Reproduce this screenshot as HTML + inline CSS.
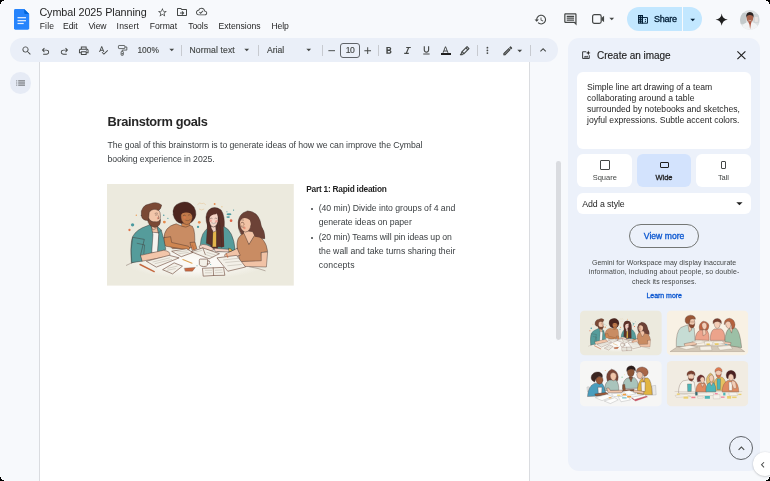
<!DOCTYPE html>
<html>
<head>
<meta charset="utf-8">
<title>Cymbal 2025 Planning</title>
<style>
*{box-sizing:border-box;margin:0;padding:0}
body{filter:blur(0.3px)}
html,body{width:770px;height:481px;overflow:hidden;background:#f7f9fc;font-family:"Liberation Sans",sans-serif;color:#1f1f1f}
.a{position:absolute}
.t{position:absolute;white-space:nowrap;line-height:1;color:#1f1f1f}
.g{color:#444746}
.tbx{-webkit-text-stroke:0.15px #444746}
.p{color:#3c4043}
svg{position:absolute;overflow:visible}
.sep{position:absolute;top:45px;width:1px;height:11px;background:#c7cad0}
#toolbar{left:10px;top:38.4px;width:548px;height:23.5px;border-radius:12px;background:#eaeff8}
#page{left:39.2px;top:62px;width:491px;height:430px;background:#fff;border:1px solid #dadce0;border-top:none}
#outline{left:9.6px;top:72px;width:21.6px;height:21.6px;border-radius:50%;background:#e6ebf5}
#panel{left:568px;top:38.2px;width:191.8px;height:432.5px;border-radius:11px;background:#ecf1fa}
.card{position:absolute;background:#fff;border-radius:6px}
.img{position:absolute;border-radius:5px;overflow:hidden}
</style>
</head>
<body>

<!-- docs logo -->
<svg style="left:14.2px;top:8.7px" width="15.2" height="20.7" viewBox="0 0 15.2 20.7"><path d="M1.4 0H10.200L15.200 5V19.300Q15.200 20.700 13.800 20.700H1.400Q0 20.700 0 19.300V1.400Q0 0 1.400 0Z" fill="#2684fc"/><path d="M10.200 0L15.200 5H11.400Q10.200 5 10.200 3.800Z" fill="#0066da"/><rect x="3.500" y="8.100" width="8.500" height="1.200" fill="#e8f0fe"/><rect x="3.500" y="11.100" width="8.500" height="1.200" fill="#e8f0fe"/><rect x="3.500" y="13.900" width="6.200" height="1.200" fill="#e8f0fe"/></svg>
<div class="t" style="left:39.4px;top:6.91px;font-size:10.8px;letter-spacing:-0.07px">Cymbal 2025 Planning</div>
<div class="t" style="left:39.7px;top:22.32px;font-size:8.6px;letter-spacing:0.16px">File</div>
<div class="t" style="left:63px;top:22.32px;font-size:8.6px;letter-spacing:-0.08px">Edit</div>
<div class="t" style="left:88.4px;top:22.32px;font-size:8.6px;letter-spacing:-0.12px">View</div>
<div class="t" style="left:116.6px;top:22.32px;font-size:8.6px;letter-spacing:0.15px">Insert</div>
<div class="t" style="left:149.8px;top:22.32px;font-size:8.6px">Format</div>
<div class="t" style="left:188.2px;top:22.32px;font-size:8.6px;letter-spacing:-0.08px">Tools</div>
<div class="t" style="left:218.5px;top:22.32px;font-size:8.6px">Extensions</div>
<div class="t" style="left:271.5px;top:22.32px;font-size:8.6px;letter-spacing:-0.1px">Help</div>
<svg style="left:157.3px;top:6.8px" width="10.8" height="10.8" viewBox="0 0 24 24" fill="#444746" ><path d="M22 9.240l-7.190-.62L12 2 9.190 8.630 2 9.240l5.460 4.730L5.820 21 12 17.270 18.180 21l-1.630-7.030L22 9.240zM12 15.400l-3.760 2.270 1-4.280-3.320-2.880 4.380-.38L12 6.100l1.710 4.040 4.380.38-3.320 2.880 1 4.280L12 15.400z"/></svg>
<svg style="left:176.2px;top:6.2px" width="12" height="12" viewBox="0 0 24 24" fill="#444746" ><path d="M20 6h-8l-2-2H4c-1.100 0-2 .9-2 2v12c0 1.100.9 2 2 2h16c1.100 0 2-.9 2-2V8c0-1.100-.9-2-2-2zm0 12H4V6h5.170l2 2H20v10zm-7.160-5H8v2h4.840l-1.580 1.590L12.670 18l4-4-4-4-1.410 1.410L12.840 13z"/></svg>
<svg style="left:196px;top:6.3px" width="11.2" height="11.2" viewBox="0 0 24 24" fill="#444746" ><path d="M19.350 10.040C18.670 6.590 15.640 4 12 4 9.110 4 6.600 5.640 5.350 8.040 2.340 8.360 0 10.910 0 14c0 3.310 2.690 6 6 6h13c2.760 0 5-2.240 5-5 0-2.640-2.050-4.780-4.650-4.960zM19 18H6c-2.210 0-4-1.790-4-4 0-2.050 1.530-3.760 3.560-3.970l1.070-.11.5-.95C8.080 7.140 9.940 6 12 6c2.620 0 4.880 1.860 5.390 4.430l.3 1.500 1.530.11c1.560.1 2.780 1.410 2.780 2.960 0 1.650-1.350 3-3 3zm-9-3.820l-2.090-2.090L6.500 13.500 10 17l6.010-6.010-1.410-1.410z"/></svg>
<svg style="left:534.4px;top:12.6px" width="13.2" height="13.2" viewBox="0 0 24 24" fill="#444746" ><path d="M13 3c-4.970 0-9 4.030-9 9H1l3.890 3.890.07.14L9 12H6c0-3.870 3.130-7 7-7s7 3.130 7 7-3.130 7-7 7c-1.930 0-3.680-.79-4.940-2.060l-1.420 1.420C8.270 19.990 10.510 21 13 21c4.970 0 9-4.030 9-9s-4.030-9-9-9zm-1 5v5l4.280 2.540.72-1.210-3.500-2.080V8H12z"/></svg>
<svg style="left:562.5px;top:11.9px" width="14.8" height="14.8" viewBox="0 0 24 24" fill="#444746" ><path d="M21.990 4c0-1.100-.89-2-1.990-2H4c-1.100 0-2 .9-2 2v12c0 1.100.9 2 2 2h14l4 4-.01-18zM20 4v13.170L18.830 16H4V4h16zM6 12h12v2H6zm0-3h12v2H6zm0-3h12v2H6z"/></svg>
<svg style="left:591.9px;top:14.100px" width="12.200" height="10" viewBox="0 0 12.200 10"><rect x="0.600" y="0.600" width="8.600" height="8.800" rx="1.800" fill="none" stroke="#444746" stroke-width="1.200"/><path d="M9.500 3.900L12.100 1.700V8.300L9.500 6.100Z" fill="#444746"/></svg>
<svg style="left:606.2px;top:13.4px" width="11.5" height="11.5" viewBox="0 0 24 24" fill="#444746" ><path d="M7 10l5 5 5-5z"/></svg>
<div class="a" style="left:627.3px;top:7px;width:74.8px;height:24.2px;border-radius:12.1px;background:#c2e7ff"></div>
<div class="a" style="left:682.2px;top:7px;width:1px;height:24.2px;background:#f8fafd"></div>
<svg style="left:637.9px;top:15.200px" width="10" height="8.700" viewBox="0 0 10 8.700" fill="#001d35"><path d="M0 0H5V8.700H0Z"/><path d="M5 2.300H10V8.700H5Z" fill="none" stroke="#001d35" stroke-width="1" transform="translate(-0.500,0.500) scale(1,0.885)"/><g fill="#c2e7ff"><rect x="0.900" y="1" width="0.900" height="0.900"/><rect x="2.900" y="1" width="0.900" height="0.900"/><rect x="0.900" y="2.900" width="0.900" height="0.900"/><rect x="2.900" y="2.900" width="0.900" height="0.900"/><rect x="0.900" y="4.800" width="0.900" height="0.900"/><rect x="2.900" y="4.800" width="0.900" height="0.900"/><rect x="0.900" y="6.700" width="0.900" height="0.900"/><rect x="2.900" y="6.700" width="0.900" height="0.900"/></g><rect x="6.900" y="4.200" width="1.100" height="1"/><rect x="6.900" y="6.100" width="1.100" height="1"/></svg>
<div class="t" style="left:654.1px;top:15.18px;font-size:9px;letter-spacing:-0.25px;color:#001d35;-webkit-text-stroke:0.3px currentColor">Share</div>
<svg style="left:686.7px;top:13.6px" width="11.5" height="11.5" viewBox="0 0 24 24" fill="#001d35" ><path d="M7 10l5 5 5-5z"/></svg>
<svg style="left:714.6px;top:12.8px" width="13.4" height="13.4" viewBox="0 0 24 24" fill="#1f1f1f" ><path d="M12 1C12.700 7.600 16.400 11.300 23 12 16.400 12.700 12.700 16.400 12 23 11.300 16.400 7.600 12.700 1 12 7.600 11.300 11.300 7.600 12 1z"/></svg>
<svg style="left:740.100px;top:9.700px" width="19.800" height="19.800" viewBox="0 0 20 20"><defs><clipPath id="av"><circle cx="10" cy="10" r="10"/></clipPath><filter id="avb" x="-0.2" y="-0.2" width="1.4" height="1.4"><feGaussianBlur stdDeviation="0.450"/></filter></defs><g clip-path="url(#av)"><rect width="20" height="20" fill="#dcdfe0"/><g filter="url(#avb)"><rect x="0" y="3" width="6" height="11" fill="#c3c9ca"/><rect x="13.500" y="4" width="6" height="9" fill="#d0d4d5"/><rect x="15" y="7" width="3" height="5" fill="#e9e4e2"/><path d="M1 20Q2 13.500 7.500 12.300L10 13L12.500 12.300Q18 13.500 19 20Z" fill="#f1f3f4"/><path d="M8.200 11.500L11.700 11.500L10.900 15L10.200 19.500L9.600 15Z" fill="#b0563f"/><ellipse cx="10" cy="7.900" rx="3.350" ry="4.300" fill="#a8634c"/><path d="M8.600 10.400Q10 11.300 11.400 10.400" stroke="#e8d8d0" stroke-width="0.600" fill="none"/><path d="M6.300 8Q5.600 2.300 10 2.100Q14.400 2.300 13.700 8Q13.300 5.200 10 5Q6.700 5.200 6.300 8Z" fill="#2a2322"/></g></g></svg>
<div class="a" id="toolbar"></div>
<svg style="left:20.8px;top:45.2px" width="11.4" height="11.4" viewBox="0 0 24 24" fill="#444746" ><path d="M15.5 14h-.79l-.28-.27C15.41 12.59 16 11.11 16 9.5 16 5.91 13.09 3 9.5 3S3 5.91 3 9.5 5.91 16 9.5 16c1.61 0 3.09-.59 4.23-1.57l.27.28v.79l5 4.99L20.49 19l-4.99-5zm-6 0C7.01 14 5 11.99 5 9.5S7.01 5 9.5 5 14 7.01 14 9.5 11.99 14 9.500 14z"/></svg>
<svg style="left:40.2px;top:45.9px" width="10.95" height="10.95" viewBox="0 0 24 24" fill="#444746" ><path d="M7 19v-2h7.1q1.575 0 2.738-1T18 13.5 16.838 11 14.1 10H7.8l2.6 2.6L9 14 4 9l5-5 1.4 1.4L7.8 8h6.3q2.425 0 4.163 1.575T20 13.5 18.263 17.425 14.1 19z"/></svg>
<svg style="left:59.3px;top:45.9px" width="10.95" height="10.95" viewBox="0 0 24 24" fill="#444746" ><g transform="translate(24,0) scale(-1,1)"><path d="M7 19v-2h7.1q1.575 0 2.738-1T18 13.5 16.838 11 14.1 10H7.8l2.6 2.6L9 14 4 9l5-5 1.4 1.4L7.8 8h6.3q2.425 0 4.163 1.575T20 13.5 18.263 17.425 14.1 19z"/></g></svg>
<svg style="left:78.3px;top:44.9px" width="11.5" height="11.5" viewBox="0 0 24 24" fill="#444746" ><path d="M19 8h-1V3H6v5H5c-1.660 0-3 1.340-3 3v6h4v4h12v-4h4v-6c0-1.660-1.340-3-3-3zM8 5h8v3H8V5zm8 14H8v-4h8v4zm2-4v-2H6v2H4v-4c0-.55.45-1 1-1h14c.55 0 1 .45 1 1v4h-2z"/><circle cx="18" cy="11.5" r="1"/></svg>
<svg style="left:98px;top:44.8px" width="10.5" height="10.5" viewBox="0 0 24 24" fill="#444746" ><path d="M12.45 16h2.09L9.43 3H7.57L2.46 16h2.09l1.120-3h5.640l1.140 3zm-6.020-5L8.500 5.480 10.570 11H6.430zm15.160.590l-8.090 8.090L9.830 16l-1.410 1.410 5.090 5.090L23 13l-1.410-1.410z"/></svg>
<svg style="left:116px;top:44.300px" width="12.800" height="12.800" viewBox="0 0 24 24" fill="none" stroke="#444746" stroke-width="1.500" stroke-linejoin="round"><rect x="4.600" y="2.800" width="12" height="5.800" rx="1.200"/><path d="M16.600 5.600H20.300V11.400H11.700V13.800"/><rect x="9.600" y="13.900" width="4.200" height="7.400" rx="1.200"/><circle cx="11.700" cy="18.400" r="1.300" fill="#444746" stroke="none"/></svg>
<div class="t g tbx" style="left:137.4px;top:46.49px;font-size:8.4px;letter-spacing:0.02px">100%</div>
<svg style="left:165.5px;top:44.4px" width="11.5" height="11.5" viewBox="0 0 24 24" fill="#444746" ><path d="M7 10l5 5 5-5z"/></svg>
<div class="sep" style="left:181.2px"></div>
<div class="t g tbx" style="left:189.4px;top:46.32px;font-size:8.6px;letter-spacing:0.14px">Normal text</div>
<svg style="left:240.5px;top:44.4px" width="11.5" height="11.5" viewBox="0 0 24 24" fill="#444746" ><path d="M7 10l5 5 5-5z"/></svg>
<div class="sep" style="left:258.4px"></div>
<div class="t g tbx" style="left:267px;top:46.32px;font-size:8.6px">Arial</div>
<svg style="left:303.4px;top:44.4px" width="11.5" height="11.5" viewBox="0 0 24 24" fill="#444746" ><path d="M7 10l5 5 5-5z"/></svg>
<div class="sep" style="left:322px"></div>
<svg style="left:326.2px;top:44.5px" width="11.4" height="11.4" viewBox="0 0 24 24" fill="#444746" ><path d="M19 13H5v-2h14v2z"/></svg>
<div class="a" style="left:340.2px;top:43px;width:19.5px;height:14.6px;border:1px solid #5f6368;border-radius:3px"></div>
<div class="t g tbx" style="left:345.8px;top:46.32px;font-size:8.6px;letter-spacing:-0.7px">10</div>
<svg style="left:362.4px;top:44.6px" width="11.4" height="11.4" viewBox="0 0 24 24" fill="#444746" ><path d="M19 13h-6v6h-2v-6H5v-2h6V5h2v6h6v2z"/></svg>
<div class="sep" style="left:378.2px"></div>
<svg style="left:382.8px;top:45.1px" width="11.5" height="11.5" viewBox="0 0 24 24" fill="#444746" ><path d="M15.6 10.790c.97-.67 1.650-1.770 1.650-2.790 0-2.260-1.750-4-4-4H7v14h7.040c2.090 0 3.710-1.700 3.710-3.790 0-1.520-.86-2.820-2.150-3.420zM10 6.500h3c.83 0 1.500.67 1.500 1.500s-.67 1.500-1.500 1.500h-3v-3zm3.500 9H10v-3h3.500c.83 0 1.500.67 1.500 1.500s-.67 1.500-1.500 1.500z"/></svg>
<svg style="left:403.600px;top:46.900px" width="7" height="6.900" viewBox="0 0 7 6.900" fill="none" stroke="#444746" stroke-width="1.100"><path d="M2.200 0.550H6.800M0.200 6.350H4.800M4.700 0.550L2.300 6.350" stroke-width="1.150"/></svg>
<svg style="left:421px;top:45.3px" width="10.9" height="10.9" viewBox="0 0 24 24" fill="#444746" ><path d="M12 17c3.310 0 6-2.690 6-6V3h-2.500v8c0 1.930-1.570 3.500-3.500 3.500S8.500 12.930 8.500 11V3H6v8c0 3.310 2.690 6 6 6zm-7 2v2h14v-2H5z"/></svg>
<svg style="left:440.3px;top:44.7px" width="11" height="11" viewBox="0 0 24 24" fill="#444746" ><path d="M11 3L5.500 17h2.250l1.120-3h6.250l1.120 3h2.250L13 3h-2zm-1.380 9L12 5.670 14.380 12H9.620z"/></svg>
<div class="a" style="left:440.8px;top:53.3px;width:10.1px;height:2.1px;background:#1f1f1f"></div>
<svg style="left:459.400px;top:45px" width="11.400" height="11.400" viewBox="0 0 24 24" fill="none" stroke="#444746" stroke-width="2.400" stroke-linejoin="round"><path d="M17 3.500L21 7.500L10.500 18L6.500 14Z"/><path d="M6.500 14L4.800 17.800L3 20.500H6.200L7.400 19.300L10.500 18"/><path d="M14.500 6L18.500 10"/></svg>
<div class="sep" style="left:477.2px"></div>
<svg style="left:481.7px;top:44.9px" width="10.8" height="10.8" viewBox="0 0 24 24" fill="#444746" ><circle cx="12" cy="6" r="2"/><circle cx="12" cy="12" r="2"/><circle cx="12" cy="18" r="2"/></svg>
<svg style="left:501.6px;top:44.5px" width="11.6" height="11.6" viewBox="0 0 24 24" fill="#444746" fill-opacity=".55"><path d="M3 17.250V21h3.750L17.810 9.940l-3.750-3.750L3 17.250zM20.710 7.040c.39-.39.39-1.020 0-1.410l-2.340-2.340c-.39-.39-1.020-.39-1.410 0l-1.830 1.830 3.750 3.750 1.830-1.830z"/></svg><svg style="left:501.6px;top:44.5px" width="11.6" height="11.6" viewBox="0 0 24 24" fill="#444746" ><path d="M14.060 9.020l.920.920L5.920 19H5v-.920l9.060-9.060M17.660 3c-.25 0-.51.100-.7.290l-1.830 1.830 3.750 3.750 1.830-1.830c.39-.39.39-1.020 0-1.410l-2.340-2.340c-.2-.2-.45-.290-.71-.290zm-3.600 3.190L3 17.250V21h3.750L17.810 9.940l-3.750-3.750z"/></svg>
<svg style="left:514px;top:44.5px" width="11.5" height="11.5" viewBox="0 0 24 24" fill="#444746" ><path d="M7 10l5 5 5-5z"/></svg>
<div class="sep" style="left:530.4px"></div>
<svg style="left:537.2px;top:44.4px" width="12.2" height="12.2" viewBox="0 0 24 24" fill="#444746" ><path d="M12 8l-6 6 1.410 1.410L12 10.830l4.590 4.580L18 14z"/></svg>
<div class="a" id="page"></div>
<div class="a" id="outline"></div>
<svg style="left:15.9px;top:79.9px" width="9.2" height="6" viewBox="0 0 9.2 6" fill="#7d8085"><rect x="0.300" y="0.200" width="0.900" height="1.300"/><rect x="0.300" y="2.350" width="0.900" height="1.300"/><rect x="0.300" y="4.500" width="0.900" height="1.300"/><rect x="2.200" y="0.200" width="6.800" height="1.300"/><rect x="2.200" y="2.350" width="6.800" height="1.300"/><rect x="2.200" y="4.500" width="6.800" height="1.300"/></svg>
<div class="a" style="left:555.9px;top:160.8px;width:4.8px;height:179.5px;border-radius:2.4px;background:#dadce0"></div>
<div class="t" style="left:107.6px;top:116.06px;font-size:12.8px;letter-spacing:-0.33px;color:#262626;font-weight:bold">Brainstorm goals</div>
<div class="t p" style="left:107.5px;top:140.74px;font-size:8.7px;letter-spacing:-0.046px">The goal of this brainstorm is to generate ideas of how we can improve the Cymbal</div>
<div class="t p" style="left:107.5px;top:154.84px;font-size:8.7px;letter-spacing:-0.06px">booking experience in 2025.</div>
<div class="t" style="left:306.2px;top:185.37px;font-size:8.3px;letter-spacing:-0.22px;font-weight:bold">Part 1: Rapid ideation</div>
<div class="t p" style="left:318.7px;top:203.74px;font-size:8.7px;letter-spacing:-0.03px">(40 min) Divide into groups of 4 and</div>
<div class="t p" style="left:318.7px;top:217.84px;font-size:8.7px;letter-spacing:-0.05px">generate ideas on paper</div>
<div class="t p" style="left:318.7px;top:232.64px;font-size:8.7px;letter-spacing:-0.07px">(20 min) Teams will pin ideas up on</div>
<div class="t p" style="left:318.7px;top:246.74px;font-size:8.7px;letter-spacing:-0.015px">the wall and take turns sharing their</div>
<div class="t p" style="left:318.7px;top:260.84px;font-size:8.7px;letter-spacing:0.15px">concepts</div>
<div class="a" style="left:311px;top:207.600px;width:2px;height:2px;border-radius:50%;background:#3c4043"></div>
<div class="a" style="left:311px;top:236.500px;width:2px;height:2px;border-radius:50%;background:#3c4043"></div>
<svg style="left:107.3px;top:183.9px" width="186.2" height="101.6" viewBox="107.3 183.9 186.2 101.6">
<defs>
<radialGradient id="tb" cx="0.5" cy="0.42" r="0.5"><stop offset="0" stop-color="#fdfcfa"/><stop offset="0.55" stop-color="#f8f6f1"/><stop offset="1" stop-color="#eceade"/></radialGradient>
<g id="scene" stroke-linejoin="round" stroke-linecap="round">
<!-- table -->
<ellipse cx="372" cy="335" rx="345" ry="82" fill="url(#tb)"/>
<path d="M32 338Q70 318 128 308" fill="none" stroke="#6b564c" stroke-width="2"/>
<path d="M625 345Q670 352 700 364" fill="none" stroke="#6b564c" stroke-width="2"/>
<!-- dots -->
<circle cx="62" cy="143" r="8" fill="#4a9aa0"/><circle cx="47" cy="168" r="5.500" fill="#e0744a"/><circle cx="80" cy="97" r="3.500" fill="#e9a15e"/>
<circle cx="215" cy="130" r="7" fill="#e58a4c"/><circle cx="212" cy="97" r="3.500" fill="#4a9aa0"/><circle cx="232" cy="112" r="3" fill="#4a9aa0"/>
<circle cx="383" cy="131" r="6.500" fill="#e58a4c"/><circle cx="377" cy="153" r="5.500" fill="#4a9aa0"/>
<circle cx="457" cy="43" r="4.500" fill="#e58a4c"/><circle cx="492" cy="56" r="2.500" fill="#e9b15e"/>
<path d="M375 45q10-12 20-4q10-6 18 4M383 68q10 8 22 0" fill="none" stroke="#e6c9a0" stroke-width="3"/>
<ellipse cx="526" cy="92" rx="12" ry="5" fill="#4a9aa0"/><ellipse cx="522" cy="106" rx="9" ry="4" fill="#4a9aa0"/><circle cx="548" cy="72" r="3" fill="#4a9aa0"/><circle cx="516" cy="80" r="2.500" fill="#4a9aa0"/>
<circle cx="536" cy="123" r="6.500" fill="#e0674a"/>
<!-- person 3 (long dark hair, teal jacket) -->
<g stroke="#3b2a26" stroke-width="2">
<path d="M423 150Q405 100 428 72Q455 48 488 72Q508 100 503 160L512 250L470 258L430 255L408 245Q418 200 423 150Z" fill="#5b3129"/>
<path d="M388 240Q392 175 428 158L440 172L438 258L392 256Z" fill="#559c9b"/>
<path d="M470 172L498 150Q548 168 556 268L472 272Z" fill="#559c9b"/>
<path d="M446 168L467 168L468 250L446 250Z" fill="#e3b64b"/>
<path d="M440 150L462 150L464 172Q452 184 440 172Z" fill="#f3d2c4"/>
<path d="M427 105Q425 80 450 80Q476 82 474 118Q470 152 450 154Q430 150 427 105Z" fill="#f4d4c6"/>
<path d="M423 150Q412 100 432 76Q455 55 484 76Q470 78 462 92Q440 92 432 110Q430 140 423 150Z" fill="#5b3129" stroke="none"/>
<path d="M474 110Q486 150 480 200L488 252L503 248L500 150Q502 110 484 76Z" fill="#5b3129" stroke="none"/>
<path d="M425 108L417 232L444 244L448 172Q430 150 429 108Z" fill="#5b3129"/><path d="M476 108L467 172L466 248L492 250L486 180Q482 130 476 108Z" fill="#5b3129"/>
<path d="M384 244Q398 232 420 240Q445 248 455 262L440 268Q410 262 386 256Z" fill="#f4d4c6"/>
<path d="M455 256L535 262L538 274L462 272Z" fill="#f4d4c6"/>
<path d="M525 256Q542 258 541 270L527 273Z" fill="#e3b64b"/>
</g>
<circle cx="438" cy="124" r="6" fill="#ec9a8e" opacity=".8"/><circle cx="466" cy="126" r="6" fill="#ec9a8e" opacity=".8"/>
<path d="M443 134Q452 142 462 134" fill="#fff" stroke="#3b2a26" stroke-width="1.500"/>
<!-- person 2 (curly hair) -->
<g stroke="#3b2a26" stroke-width="2">
<path d="M258 95Q250 50 290 38Q330 22 358 58Q378 95 352 125Q340 140 300 138Q265 132 258 95Z" fill="#4c261f"/>
<path d="M300 135L336 135L340 160L296 160Z" fill="#cf8651"/>
<path d="M213 210Q212 152 272 138L300 150Q318 160 338 146L350 150Q366 175 360 252L255 258Z" fill="#c98c63"/>
<path d="M294 105Q292 78 320 76Q350 78 350 108Q346 140 322 142Q298 138 294 105Z" fill="#c07a4a"/>
<path d="M213 205L245 200L250 228L330 246Q345 256 330 264L222 246Q210 236 213 205Z" fill="#cf8651"/>
<path d="M340 228L362 226L372 258L350 266Z" fill="#cf8651"/>
</g>
<circle cx="313" cy="108" r="6" fill="#dd7a4e" opacity=".8"/>
<path d="M318 122Q330 128 340 118" fill="none" stroke="#3b2a26" stroke-width="1.500"/>
<path d="M292 100Q290 70 320 66Q352 70 352 100Q340 82 318 84Q300 84 292 100Z" fill="#4c261f"/>
<!-- person 1 (bearded man) -->
<g stroke="#3b2a26" stroke-width="2">
<path d="M148 140L182 150L186 182L150 182Z" fill="#f0c2a4"/>
<path d="M150 178L190 182L184 276L152 276Z" fill="#f6f3ee"/>
<path d="M56 326Q50 230 62 200Q80 165 132 148L150 140L160 190L154 278L100 300Z" fill="#559c9b"/>
<path d="M180 150L200 168Q215 215 222 262L182 276L188 190Z" fill="#559c9b"/>
<path d="M135 100Q132 66 165 62Q196 64 196 100Q198 140 172 152Q140 150 135 100Z" fill="#f2c6aa"/>
<path d="M134 118Q136 150 170 156Q198 152 196 118Q186 132 172 128Q150 132 140 112Z" fill="#7a4935"/>
<path d="M104 98Q98 50 146 42Q176 28 202 48Q198 70 186 74Q160 60 142 82L138 122Q108 124 104 98Z" fill="#7a4935"/>
<path d="M100 290L210 266Q244 268 242 290Q236 304 206 300L108 318Z" fill="#f2c6aa"/>
<path d="M62 205Q50 260 58 325L108 318L100 290L118 215Z" fill="#559c9b"/>
</g>
<circle cx="184" cy="110" r="5" fill="#e58a72" opacity=".7"/>
<!-- person 4 (right) -->
<g stroke="#3b2a26" stroke-width="2">
<path d="M572 160Q560 90 615 76Q672 78 682 150Q702 180 698 210L640 206L585 190Z" fill="#6c4237"/>
<path d="M598 170L640 176L650 196L622 240L596 196Z" fill="#f1c3a6"/>
<path d="M565 256Q558 200 598 184L622 238L650 192Q704 204 712 272L682 278L690 322L580 322Q570 290 565 256Z" fill="#c98c63"/>
<path d="M576 130Q574 100 604 98Q634 102 632 140Q628 176 604 178Q580 172 576 130Z" fill="#f1c3a6"/>
<path d="M572 160Q562 96 615 80Q668 82 680 150Q700 182 696 208L650 200Q640 150 626 120Q600 100 582 120Q576 140 572 160Z" fill="#6c4237" stroke="none"/>
<path d="M682 276L712 274L706 346L545 342Q520 336 528 322L680 316Z" fill="#f1c3a6"/>
<path d="M566 258L580 290L520 304Q500 300 506 286Z" fill="#f1c3a6"/>
</g>
<circle cx="590" cy="140" r="9" fill="none" stroke="#8a5a40" stroke-width="1.500"/>
<circle cx="600" cy="158" r="6" fill="#e7876e" opacity=".8"/>
<g fill="none" stroke="#3b2a26" stroke-width="1.800" stroke-linecap="round">
<path d="M172 96l8 -1M170 88q6 -4 12 -1"/><path d="M186 100l3 12l-5 2"/>
<path d="M150 150L160 168L176 160M200 168L190 180"/><path d="M84 232L120 240L116 282"/>
<path d="M306 98q5 -4 10 0M330 96q5 -4 10 0"/>
<path d="M436 112q4 -4 9 0M458 112q4 -4 9 0"/>
<path d="M586 132q5 -3 10 1M582 150q6 8 16 4"/><path d="M578 122q8 -6 18 -2"/>
</g>
<!-- notebooks -->
<g fill="#f3f0e8" stroke="#6e4a3c" stroke-width="3">
<path d="M130 318L238 290L286 302L178 346Z"/>
<path d="M252 270L322 258L352 276L298 296Z"/>
<path d="M346 272L400 254L480 282L432 306Z"/><path d="M400 254L412 286" fill="none"/>
<path d="M208 358L262 326L302 342L256 378Z"/>
<path d="M470 302L562 290L606 346L522 366Z"/>
<path d="M400 352L450 350L500 348L506 386L452 387L404 390Z"/><path d="M450 350L452 387" fill="none"/>
<path d="M383 312Q383 308 388 308L418 308Q424 308 424 313L422 338Q420 344 404 344Q386 344 384 336Z"/>
<path d="M423 316Q436 314 434 326Q432 334 421 332" fill="none"/>
</g>
<g fill="none" stroke="#aaa397" stroke-width="2">
<path d="M160 322L240 302M170 330L250 310"/><path d="M275 274L325 268M285 282L330 276"/><path d="M420 276L460 288M412 286L450 298M360 276L395 266"/><path d="M232 352L276 342M228 362L268 354"/><path d="M500 312L570 304M510 324L580 318M520 340L585 334"/><path d="M412 362L442 362M412 374L442 374M460 362L492 360M460 374L494 372"/>
</g>
<path d="M98 334L166 368" stroke="#c4683f" stroke-width="7" fill="none"/>
<path d="M304 310L348 328" stroke="#dca454" stroke-width="5" fill="none"/>
<path d="M312 352L364 348L350 366L316 366Z" fill="#c9673f" stroke="#5a4037" stroke-width="1.500"/>
<path d="M350 240L358 262" stroke="#c4683f" stroke-width="4" fill="none"/>
<path d="M514 282L520 300" stroke="#c4683f" stroke-width="4" fill="none"/>
<circle cx="438" cy="334" r="2.500" fill="#4a9aa0"/><circle cx="372" cy="340" r="2.500" fill="#4a9aa0"/>
</g>
</defs>
<rect x="107.300" y="183.900" width="186.800" height="101.600" fill="#eceade"/>
<g transform="translate(120,195) scale(0.20779)"><use href="#scene"/></g>
</svg>

<div class="a" id="panel"></div>
<svg style="left:582.100px;top:50.800px" width="8.200" height="8.200" viewBox="0 0 8.200 8.200"><path d="M7.300 4.300V7.050Q7.300 7.600 6.750 7.600H1.150Q0.600 7.600 0.600 7.050V1.350Q0.600 0.800 1.150 0.800H4.300" fill="none" stroke="#3c4043" stroke-width="1.050"/><path d="M1.600 6.600L3.100 4.700L4.100 5.800L5.100 4.600L6.500 6.600Z" fill="#2c2f31"/><path d="M6.300 -0.400L6.950 1.250L8.600 1.900L6.950 2.550L6.300 4.200L5.650 2.550L4 1.900L5.650 1.250Z" fill="#1f1f1f"/></svg>

<div class="t" style="left:597.1px;top:51.03px;font-size:10px;letter-spacing:-0.03px;-webkit-text-stroke:0.15px currentColor">Create an image</div>
<svg style="left:736.800px;top:50.900px" width="8.800" height="8.600" viewBox="0 0 8.800 8.600" fill="none" stroke="#1f1f1f" stroke-width="1.150"><path d="M0.400 0.400L8.400 8.200M8.400 0.400L0.400 8.200"/></svg>
<div class="card" style="left:577.4px;top:72.4px;width:173.7px;height:76.2px"></div>
<div class="t" style="left:587px;top:82.72px;font-size:8.6px">Simple line art drawing of a team</div>
<div class="t" style="left:587px;top:93.62px;font-size:8.6px;letter-spacing:0.05px">collaborating around a table</div>
<div class="t" style="left:587px;top:104.52px;font-size:8.6px;letter-spacing:0.016px">surrounded by notebooks and sketches,</div>
<div class="t" style="left:587px;top:115.52px;font-size:8.6px;letter-spacing:-0.011px">joyful expressions. Subtle accent colors.</div>
<div class="card" style="left:577.4px;top:154.1px;width:54.8px;height:33.2px"></div>
<div class="card" style="left:636.8px;top:154.1px;width:54.6px;height:33.2px;background:#d3e3fd"></div>
<div class="card" style="left:696.3px;top:154.1px;width:54.8px;height:33.2px"></div>
<div class="a" style="left:600px;top:160px;width:9.6px;height:9.6px;border:1.2px solid #444746;border-radius:1px"></div>
<div class="a" style="left:659.7px;top:161.9px;width:9.2px;height:5.8px;border:1.2px solid #1f1f1f;border-radius:1px"></div>
<div class="a" style="left:720.7px;top:160.5px;width:5.6px;height:8.8px;border:1.2px solid #444746;border-radius:1px"></div>
<div class="t g" style="left:592.7px;top:174.45px;font-size:7.5px;letter-spacing:-0.015px">Square</div>
<div class="t" style="left:655.5px;top:174.45px;font-size:7.5px;letter-spacing:-0.02px;-webkit-text-stroke:0.3px currentColor">Wide</div>
<div class="t g" style="left:717.9px;top:174.45px;font-size:7.5px;letter-spacing:-0.04px">Tall</div>
<div class="card" style="left:577.4px;top:192.5px;width:173.7px;height:21.6px"></div>
<div class="t" style="left:582.3px;top:199.65px;font-size:8.8px;letter-spacing:-0.11px">Add a style</div>
<svg style="left:731.96px;top:195.65px" width="14.9" height="14.9" viewBox="0 0 24 24" fill="#1f1f1f" ><path d="M7 10l5 5 5-5z"/></svg>
<div class="a" style="left:628.8px;top:223.7px;width:70.6px;height:24.2px;border:1px solid #747775;border-radius:12.1px"></div>
<div class="t" style="left:643.8px;top:232.02px;font-size:8.6px;letter-spacing:0.016px;color:#0b57d0;-webkit-text-stroke:0.3px currentColor">View more</div>
<div class="t g" style="left:591.9px;top:258.57px;font-size:7px;letter-spacing:0.05px">Gemini for Workspace may display inaccurate</div>
<div class="t g" style="left:588.8px;top:268.27px;font-size:7px;letter-spacing:0.116px">information, including about people, so double-</div>
<div class="t g" style="left:631.9px;top:278.07px;font-size:7px;letter-spacing:0.064px">check its responses.</div>
<div class="t" style="left:646.4px;top:292.37px;font-size:7px;letter-spacing:-0.02px;color:#0b57d0;-webkit-text-stroke:0.3px currentColor">Learn more</div>
<svg style="left:0;top:0" width="770" height="481" viewBox="0 0 770 481">
<defs>
<clipPath id="c1"><rect x="580" y="310.400" width="81.800" height="45.100" rx="5"/></clipPath>
<clipPath id="c2"><rect x="666.700" y="310.400" width="81.600" height="45.100" rx="5"/></clipPath>
<clipPath id="c3"><rect x="580" y="360.900" width="81.800" height="45.600" rx="5"/></clipPath>
<clipPath id="c4"><rect x="666.700" y="360.900" width="81.600" height="45.600" rx="5"/></clipPath>
</defs>
<!-- thumb 1 -->
<g clip-path="url(#c1)"><rect x="580" y="310.400" width="81.800" height="45.100" fill="#eceade"/>
<g transform="translate(585.580,315.300) scale(0.09128)"><use href="#scene"/></g></g>
<!-- thumb 2 -->
<g clip-path="url(#c2)"><rect x="666.700" y="310.400" width="81.600" height="45.100" fill="#f8f1e4"/>
<g transform="translate(664,308) scale(0.11169)" stroke="#5a4038" stroke-width="3" stroke-linejoin="round">
<path d="M55 390L135 338L650 338L722 390Z" fill="#d3c8b8" stroke="#8a7a6a"/>
<!-- man -->
<path d="M110 345Q105 215 150 175L215 150L270 180L282 330L180 345Z" fill="#c6dcd4"/>
<path d="M215 150L250 150L245 200L225 215Z" fill="#f0c8ae"/>
<path d="M222 110Q222 88 250 88Q278 92 276 130Q274 172 250 178Q226 170 222 110Z" fill="#f0c8ae"/>
<path d="M222 140Q226 176 252 180Q274 174 274 140Q262 156 248 150Q232 152 222 140Z" fill="#8a4a30"/>
<path d="M190 120Q182 72 235 64Q280 66 282 100Q260 92 236 102L226 140Q194 146 190 120Z" fill="#9a5636"/>
<path d="M235 125h38" stroke="#6a4a3a" stroke-width="3" fill="none"/>
<path d="M180 320L280 300Q300 310 290 328L190 345Z" fill="#f0c8ae"/>
<!-- woman 2 -->
<path d="M318 195Q305 140 350 118Q398 122 402 160Q398 195 385 200Z" fill="#c0623e"/>
<path d="M280 285Q282 215 325 198L385 198Q408 230 404 290Z" fill="#eca38b"/>
<path d="M338 150Q340 128 362 130Q386 134 384 162Q380 192 362 194Q340 188 338 150Z" fill="#f3cdb6"/>
<path d="M345 195L372 195L376 232L350 250Z" fill="#f3cdb6"/>
<!-- woman 3 -->
<path d="M415 290Q412 205 450 188L510 186Q548 205 545 290Z" fill="#eca38b"/>
<path d="M448 135Q448 112 476 112Q506 116 504 145Q500 182 476 184Q452 178 448 135Z" fill="#f3cdb6"/>
<path d="M440 140Q432 96 478 94Q518 98 514 140Q500 118 476 120Q452 120 440 140Z" fill="#7a4030"/>
<!-- woman 4 -->
<path d="M545 300Q550 200 585 182L640 178Q680 200 695 355L600 340Z" fill="#9cc0a6"/>
<path d="M585 180L615 180L605 225Z" fill="#f3cdb6"/>
<path d="M550 140Q550 112 578 112Q604 116 602 146Q598 180 578 184Q554 178 550 140Z" fill="#f3cdb6"/>
<path d="M540 150Q535 98 585 92Q632 98 636 150Q634 185 610 190Q604 140 590 122Q566 112 552 130Z" fill="#b5623e"/>
<path d="M520 300L600 310L596 330L516 320Z" fill="#f3cdb6"/>
<!-- papers -->
<g fill="#f5f0e6" stroke="#9a8a7a" stroke-width="2.500">
<path d="M130 352L230 335L300 350L200 372Z"/><path d="M250 300L330 292L380 306L300 320Z"/><path d="M320 345L420 340L430 378L325 380Z"/><path d="M440 300L520 296L545 318L455 326Z"/><path d="M480 345L590 335L615 365L500 378Z"/><path d="M360 300L430 296L440 330L368 334Z"/>
</g>
<rect x="380" y="318" width="30" height="14" fill="#e8c860" stroke="none"/><rect x="455" y="316" width="34" height="14" fill="#e8c860" stroke="none"/><rect x="545" y="322" width="22" height="10" fill="#7ab8c8" stroke="none"/>
</g></g>
<!-- thumb 3 -->
<g clip-path="url(#c3)"><rect x="580" y="360.900" width="81.800" height="45.600" fill="#f6f6f5"/>
<g transform="translate(578,358) scale(0.11169)" stroke="#4a3530" stroke-width="3" stroke-linejoin="round">
<path d="M660 250L695 245L700 330L665 332Z" fill="#e8e8e8" stroke="#9a9a9a"/>
<path d="M80 260L100 258L100 300L85 300Z" fill="#e8e8e8" stroke="#9a9a9a"/>
<!-- woman1 -->
<path d="M85 345Q90 250 150 225L215 225Q245 260 248 320L180 340Z" fill="#4a9dbd"/>
<path d="M178 262L215 262L212 318L182 318Z" fill="#f6f6f5"/>
<path d="M160 195Q160 165 192 165Q226 168 224 200Q220 232 192 236Q164 230 160 195Z" fill="#9a5a3a"/>
<path d="M150 215Q108 200 120 160Q140 118 190 126Q226 140 218 175Q196 160 172 172Q158 186 150 215Z" fill="#3a2520"/>
<path d="M150 322L250 308Q275 316 268 328L160 340Z" fill="#9a5a3a"/>
<!-- woman2 -->
<path d="M262 205Q240 130 300 100Q355 110 360 170Q360 205 345 215Z" fill="#7a4535"/>
<path d="M240 290Q236 220 280 198L340 198Q368 225 365 295Z" fill="#a9c4bc"/>
<path d="M288 160Q290 130 316 130Q346 134 344 165Q340 200 316 204Q292 198 288 160Z" fill="#f0c4a8"/>
<path d="M255 270L275 268L290 290L395 288Q405 300 395 310L270 312Z" fill="#f0c4a8"/>
<!-- man3 -->
<path d="M400 275Q400 200 440 180L505 176Q542 200 540 270Z" fill="#a9c4bc"/>
<path d="M455 170L490 170L475 215Z" fill="#8a5435"/>
<path d="M440 120Q440 92 472 92Q506 96 504 128Q500 166 472 170Q444 164 440 120Z" fill="#8a5435"/>
<path d="M436 118Q432 72 478 70Q520 76 514 118Q500 98 474 98Q450 100 436 118Z" fill="#2a1d1a"/>
<path d="M400 240L418 236L425 285L500 280L505 296L400 300Z" fill="#8a5435"/>
<!-- woman4 -->
<path d="M530 320Q530 215 575 180L625 178Q660 200 665 330L600 330Z" fill="#e2b540"/>
<path d="M565 215L602 215L600 300L568 300Z" fill="#f4f0ea"/>
<path d="M575 178L600 178L590 215Z" fill="#f0c4a8"/>
<path d="M526 150Q526 120 554 120Q582 124 580 155Q576 186 554 188Q530 184 526 150Z" fill="#f0c4a8"/>
<path d="M522 130Q520 84 575 80Q632 90 628 135Q620 165 590 165Q585 130 560 122Q536 118 522 130Z" fill="#a86648"/>
<path d="M500 285L590 300L588 322L495 305Z" fill="#f0c4a8"/>
<!-- papers -->
<g fill="#fdfdfc" stroke="#8a8a8a" stroke-width="2.500">
<path d="M155 355L260 325L310 345L215 382Z"/><path d="M235 385L330 355L360 375L290 408Z"/><path d="M360 345L440 335L470 375L385 392Z"/><path d="M400 300L460 290L520 320L450 335Z"/><path d="M480 360L600 335L622 348L515 385Z" fill="#d05060" stroke="#a03040"/><path d="M478 352L598 328L612 340L505 372Z"/><path d="M300 320L380 315L400 340L320 345Z"/>
</g>
<g stroke="none"><rect x="400" y="320" width="30" height="14" fill="#f0a040"/><rect x="440" y="340" width="36" height="14" fill="#f0a040"/><rect x="350" y="328" width="30" height="10" fill="#f0d060"/><rect x="395" y="352" width="40" height="10" fill="#60b8c8"/><rect x="275" y="352" width="24" height="9" fill="#f0a040"/><circle cx="395" cy="172" r="7" fill="#a8d8b8"/><circle cx="245" cy="112" r="5" fill="#f0c090"/><circle cx="415" cy="150" r="4" fill="#f0d090"/></g>
</g></g>
<!-- thumb 4 -->
<g clip-path="url(#c4)"><rect x="666.700" y="360.900" width="81.600" height="45.600" fill="#f1ece2"/>
<g transform="translate(664,358) scale(0.11169)" stroke="#5a4038" stroke-width="2.500" stroke-linejoin="round">
<!-- man4 (back) -->
<path d="M445 290Q440 200 480 172L520 170Q562 195 560 290Z" fill="#e6c060"/>
<path d="M474 185L506 185L504 282L476 282Z" fill="#4db5b8"/>
<path d="M462 128Q462 104 488 104Q516 108 514 136Q510 170 488 174Q464 168 462 128Z" fill="#f3cdb6"/>
<path d="M464 145Q468 172 488 176Q510 170 512 145Q500 158 488 154Q474 156 464 145Z" fill="#e07a50"/>
<path d="M456 128Q452 88 490 84Q524 90 520 126Q508 110 488 110Q468 112 456 128Z" fill="#e07a50"/>
<!-- man1 -->
<path d="M130 315Q128 235 170 205L225 195L270 215L285 315Z" fill="#f6f3ec"/>
<path d="M210 232L246 232L244 300L212 300Z" fill="#4db5b8"/>
<path d="M216 165Q216 140 242 140Q270 144 268 172Q264 200 242 204Q218 198 216 165Z" fill="#f3cdb6"/>
<path d="M218 178Q222 204 244 208Q266 202 266 178Q256 190 242 186Q228 188 218 178Z" fill="#7a4030"/>
<path d="M206 160Q200 118 244 114Q284 120 278 160Q266 140 242 142Q220 144 206 160Z" fill="#7a4030"/>
<!-- woman2 -->
<path d="M300 215Q282 165 330 150Q368 158 366 200Z" fill="#6e3030"/>
<path d="M285 305Q285 240 320 222L365 222Q384 250 380 305Z" fill="#e08a60"/>
<path d="M324 190Q326 168 346 170Q366 174 364 198Q360 224 344 226Q326 220 324 190Z" fill="#f3cdb6"/>
<path d="M330 230L360 228L345 262Z" fill="#f3cdb6"/>
<!-- woman3 -->
<path d="M385 235Q365 170 415 135Q455 150 450 235Z" fill="#e2c070"/>
<path d="M375 305Q372 240 405 222L445 222Q468 248 465 305Z" fill="#4db5b8"/>
<path d="M404 175Q406 150 426 152Q446 156 444 184Q440 214 424 216Q406 210 404 175Z" fill="#f3cdb6"/>
<path d="M410 216L440 216L425 250Z" fill="#f3cdb6"/>
<!-- person5 -->
<path d="M520 305Q522 225 570 202L625 200Q668 225 670 305Z" fill="#e08a60"/>
<path d="M580 215L612 215L610 292L582 292Z" fill="#f6f3ec"/>
<path d="M574 165Q574 140 600 140Q628 144 626 172Q622 200 600 204Q576 198 574 165Z" fill="#f3cdb6"/>
<path d="M560 175Q545 120 600 110Q652 120 642 175Q636 190 626 190Q628 150 600 142Q574 148 572 188Z" fill="#4a2020"/>
<path d="M610 200L640 215L650 270L625 275L605 225Z" fill="#f3cdb6"/>
<!-- table -->
<path d="M95 300H700" stroke="#9a8a7a" stroke-width="2" fill="none"/>
<g fill="#f6f3ec" stroke="#9a8a7a" stroke-width="2">
<path d="M100 335L200 325L240 345L110 352Z"/><path d="M300 315L440 310L445 335L305 338Z"/><path d="M440 330L500 328L502 365L442 366Z"/><path d="M580 310L650 308L660 335L585 338Z"/><path d="M300 345L350 343L352 358L302 360Z"/>
</g>
<g stroke="none"><rect x="175" y="346" width="42" height="18" fill="#ecd070"/><rect x="245" y="346" width="36" height="14" fill="#f08090"/><rect x="365" y="340" width="46" height="25" fill="#4db5b8"/><rect x="455" y="314" width="26" height="11" fill="#f080a0"/><rect x="510" y="345" width="32" height="11" fill="#f080a0"/><rect x="565" y="340" width="36" height="24" fill="#ecd070"/><rect x="610" y="345" width="40" height="14" fill="#ecd070"/><rect x="530" y="310" width="20" height="25" fill="#4db5b8"/><rect x="280" y="305" width="20" height="30" fill="#3a6a70"/><rect x="115" y="318" width="26" height="12" fill="#ecd070"/><rect x="665" y="320" width="28" height="12" fill="#ecd070"/></g>
</g></g>
</svg>

<div class="a" style="left:729px;top:436.1px;width:24px;height:24px;border:1px solid #5f6368;border-radius:50%"></div>
<svg style="left:734.6px;top:441.6px" width="12.8" height="12.8" viewBox="0 0 24 24" fill="#444746" ><path d="M12 8l-6 6 1.410 1.410L12 10.830l4.590 4.580L18 14z"/></svg>
<div class="a" style="left:753.3px;top:452.2px;width:24px;height:24px;border-radius:50%;background:#fff;box-shadow:0 0.5px 2px rgba(60,64,67,.35)"></div>
<svg style="left:757px;top:458.6px" width="11.5" height="11.5" viewBox="0 0 24 24" fill="#444746" ><path d="M15.410 7.410L14 6l-6 6 6 6 1.410-1.410L10.830 12z"/></svg>
<svg style="left:0;top:0" width="770" height="481" viewBox="0 0 770 481" shape-rendering="crispEdges"><g id="cr"><path d="M0 0H5V1H3V2H2V3H1V5H0Z" fill="#fff"/><path d="M0 0H4V1H2V2H1V4H0Z" fill="#000"/></g><use href="#cr" transform="translate(770,0) scale(-1,1)"/><use href="#cr" transform="translate(0,481) scale(1,-1)"/><use href="#cr" transform="translate(770,481) scale(-1,-1)"/></svg>
</body>
</html>
